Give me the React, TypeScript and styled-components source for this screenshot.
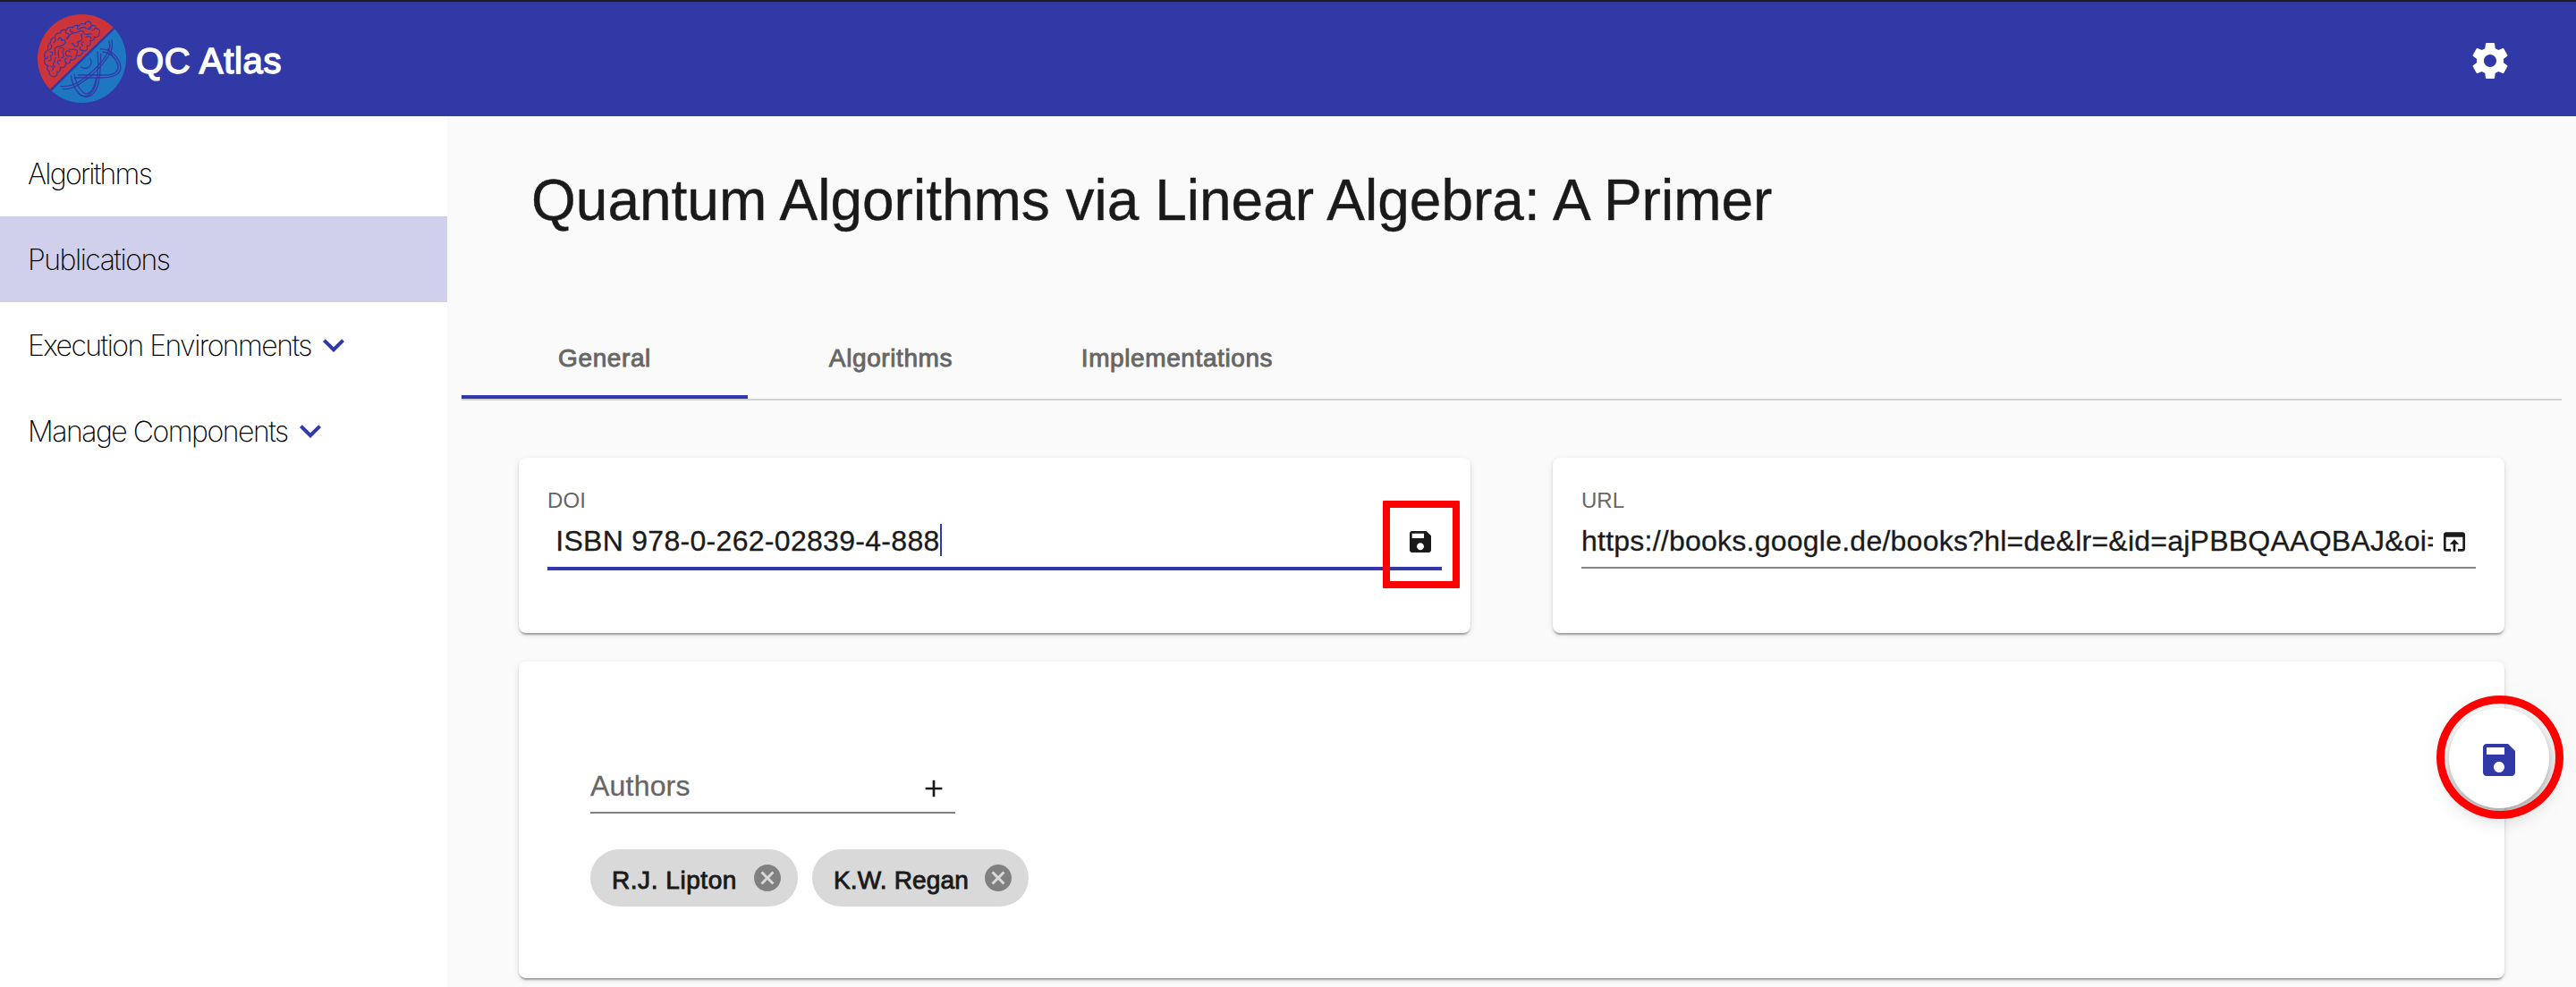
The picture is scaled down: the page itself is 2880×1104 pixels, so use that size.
import React from "react";
import styled, { createGlobalStyle } from "styled-components";

const PRIMARY = "#3139a6";
const INK = "#1a1a1a";
const MUTED = "#666666";

const GlobalStyle = createGlobalStyle`
  * { box-sizing: border-box; }
  body {
    margin: 0;
    background: #fafafa;
    color: ${INK};
    font-family: "Liberation Sans", Arial, sans-serif;
    overflow: hidden;
  }
`;

const Page = styled.div`
  display: flex;
  flex-direction: column;
  height: 1104px;
  overflow: hidden;
  border-top: 2px solid #1e1e1e;
`;

const Toolbar = styled.header`
  flex: none;
  height: 128px;
  padding: 4px 72px 0 42px;
  display: flex;
  align-items: center;
  background: ${PRIMARY};
  color: #fff;
`;

const Brand = styled.div`
  flex: 1;
  display: flex;
  align-items: center;
  gap: 11px;
  > svg { margin-top: -5px; }
`;

const BrandName = styled.span`
  font-size: 40px;
  line-height: 48px;
  letter-spacing: 0.65px;
  -webkit-text-stroke: 1.5px #fff;
`;

const Body = styled.div`
  flex: 1;
  display: flex;
  min-height: 0;
`;

const Sidebar = styled.nav`
  flex: none;
  width: 500px;
  padding-top: 16px;
  background: #fff;
`;

const NavItem = styled.a<{ $active?: boolean; $track?: number }>`
  display: flex;
  align-items: center;
  height: 96px;
  padding-left: 31px;
  background: ${(p) => (p.$active ? "#d0d0ec" : "transparent")};
  color: #000;
  font-family: Inter, "Liberation Sans", sans-serif;
  font-weight: 250;
  font-size: 32px;
  letter-spacing: ${(p) => p.$track ?? -1}px;
  white-space: nowrap;
  svg { color: ${PRIMARY}; margin-left: 1px; }
`;

const Main = styled.main`
  flex: 1;
  min-width: 0;
  padding: 54px 16px 0;
`;

const Title = styled.h1`
  margin: 0 0 127px;
  padding-left: 78px;
  font-size: 64px;
  line-height: 80px;
  font-weight: 400;
  height: 80px;
  -webkit-text-stroke: 0.4px ${INK};
`;

const Tabs = styled.div`
  display: flex;
  height: 57px;
  border-bottom: 2px solid #d2d2d2;
`;

const Tab = styled.div<{ $active?: boolean }>`
  width: 320px;
  text-align: center;
  font-size: 28px;
  line-height: 20px;
  color: ${MUTED};
  letter-spacing: 0.6px;
  -webkit-text-stroke: 0.9px ${MUTED};
  border-bottom: ${(p) => (p.$active ? `4px solid ${PRIMARY}` : "none")};
`;

const Content = styled.div`
  padding: 64px 64px 0;
  display: grid;
  grid-template-columns: 1064px 1064px;
  column-gap: 92px;
  row-gap: 32px;
`;

const Card = styled.section<{ $wide?: boolean }>`
  grid-column: ${(p) => (p.$wide ? "1 / -1" : "auto")};
  height: ${(p) => (p.$wide ? 354 : 196)}px;
  padding: ${(p) => (p.$wide ? "120px 80px 0" : "32px 32px 0")};
  border-radius: 8px;
  background: #fff;
  box-shadow: 0 4px 2px -2px rgba(0, 0, 0, 0.2),
    0 2px 2px 0 rgba(0, 0, 0, 0.14), 0 2px 6px 0 rgba(0, 0, 0, 0.12);
`;

const Label = styled.label<{ $track?: number }>`
  display: block;
  height: 32px;
  line-height: 32px;
  font-size: 24px;
  color: ${MUTED};
  letter-spacing: ${(p) => p.$track ?? 0}px;
`;

const InputRow = styled.div<{ $focused?: boolean }>`
  display: flex;
  align-items: center;
  gap: 8px;
  height: ${(p) => (p.$focused ? 62 : 60)}px;
  padding: 2px 8px 0 0;
  border-bottom: ${(p) => (p.$focused ? `4px solid ${PRIMARY}` : "2px solid #858585")};
`;

const Value = styled.div<{ $track?: number; $muted?: boolean }>`
  flex: 1;
  min-width: 0;
  display: flex;
  align-items: center;
  overflow: hidden;
  white-space: pre;
  font-size: 32px;
  line-height: 40px;
  padding-bottom: 2px;
  color: ${(p) => (p.$muted ? MUTED : INK)};
  letter-spacing: ${(p) => p.$track ?? 0}px;
  -webkit-text-stroke: 0.3px currentColor;
`;

const Caret = styled.span`
  width: 2px;
  height: 36px;
  margin-bottom: 2px;
  background: ${PRIMARY};
`;

const AuthorField = styled.div`
  display: flex;
  align-items: center;
  width: 408px;
  height: 50px;
  padding: 0 8px 8px 0;
  border-bottom: 2px solid #808080;
  svg { margin-top: 4px; }
`;

const Chips = styled.div`
  display: flex;
  gap: 16px;
  margin-top: 40px;
`;

const Chip = styled.div<{ $width: number; $track: number }>`
  display: flex;
  align-items: center;
  justify-content: space-between;
  width: ${(p) => p.$width}px;
  height: 64px;
  padding: 0 16px 0 24px;
  border-radius: 32px;
  background: #d9d9d9;
  font-size: 28px;
  line-height: 36px;
  white-space: nowrap;
  letter-spacing: ${(p) => p.$track}px;
  -webkit-text-stroke: 0.9px ${INK};
  svg { color: #808080; stroke: none; }
  span { padding-top: 5px; }
`;

const Fab = styled.button`
  position: absolute;
  left: 2738px;
  top: 792px;
  width: 112px;
  height: 112px;
  padding: 4px 0 0;
  display: flex;
  align-items: center;
  justify-content: center;
  border: 0;
  border-radius: 50%;
  background: #fff;
  color: ${PRIMARY};
  box-shadow: 0 6px 10px -2px rgba(0, 0, 0, 0.2),
    0 12px 20px 0 rgba(0, 0, 0, 0.14), 0 2px 36px 0 rgba(0, 0, 0, 0.12);
`;

const SquareMark = styled.div`
  position: absolute;
  left: 1546px;
  top: 560px;
  width: 86px;
  height: 98px;
  border: 8px solid #ff0000;
  border-radius: 1px;
`;

const RoundMark = styled.div`
  position: absolute;
  left: 2724px;
  top: 778px;
  width: 142px;
  height: 138px;
  border: 9px solid #ff0000;
  border-radius: 50%;
`;

const paths = {
  settings:
    "M19.43 12.98c.04-.32.07-.64.07-.98s-.03-.66-.07-.98l2.11-1.65c.19-.15.24-.42.12-.64l-2-3.46c-.12-.22-.39-.3-.61-.22l-2.49 1c-.52-.4-1.08-.73-1.69-.98l-.38-2.65C14.46 2.18 14.25 2 14 2h-4c-.25 0-.46.18-.49.42l-.38 2.65c-.61.25-1.17.59-1.69.98l-2.49-1c-.23-.09-.49 0-.61.22l-2 3.46c-.13.22-.07.49.12.64l2.11 1.65c-.04.32-.07.65-.07.98s.03.66.07.98l-2.11 1.65c-.19.15-.24.42-.12.64l2 3.46c.12.22.39.3.61.22l2.49-1c.52.4 1.08.73 1.69.98l.38 2.65c.03.24.24.42.49.42h4c.25 0 .46-.18.49-.42l.38-2.65c.61-.25 1.17-.59 1.69-.98l2.49 1c.23.09.49 0 .61-.22l2-3.46c.12-.22.07-.49-.12-.64l-2.11-1.65zM12 15.5c-1.93 0-3.5-1.57-3.5-3.5s1.57-3.5 3.5-3.5 3.5 1.57 3.5 3.5-1.57 3.5-3.5 3.5z",
  expand: "M16.59 8.59L12 13.17 7.41 8.59 6 10l6 6 6-6z",
  save: "M17 3H5c-1.11 0-2 .9-2 2v14c0 1.1.89 2 2 2h14c1.1 0 2-.9 2-2V7l-4-4zm-5 16c-1.66 0-3-1.34-3-3s1.34-3 3-3 3 1.34 3 3-1.34 3-3 3zm3-10H5V5h10v4z",
  open: "M19 4H5c-1.11 0-2 .9-2 2v12c0 1.1.89 2 2 2h4v-2H5V8h14v10h-4v2h4c1.1 0 2-.9 2-2V6c0-1.1-.89-2-2-2zm-7 6l-4 4h3v6h2v-6h3l-4-4z",
  add: "M19 13h-6v6h-2v-6H5v-2h6V5h2v6h6v2z",
  cancel:
    "M12 2C6.47 2 2 6.47 2 12s4.47 10 10 10 10-4.47 10-10S17.53 2 12 2zm5 13.59L15.59 17 12 13.41 8.41 17 7 15.59 10.59 12 7 8.41 8.41 7 12 10.59 15.59 7 17 8.41 13.41 12 17 15.59z",
};

const IconSvg = styled.svg`
  flex: none;
  display: block;
`;

function Icon({ name, size }: { name: keyof typeof paths; size: number }) {
  return (
    <IconSvg width={size} height={size} viewBox="0 0 24 24" fill="currentColor">
      <path d={paths[name]} />
    </IconSvg>
  );
}

function Logo() {
  return (
    <IconSvg width="99" height="99" viewBox="36 33 297 297" fill="none">
      <clipPath id="disc">
        <circle cx="184.5" cy="181.5" r="148.5" />
      </clipPath>
      <g clipPath="url(#disc)">
        <path d="M30 337V27H346Z" fill="#cc343b" />
        <path d="M30 337H346V27Z" fill="#2077c1" />
        <path d="M30 337L346 27" stroke={PRIMARY} strokeWidth="8" />
      </g>
      <g stroke={PRIMARY} strokeWidth="3.4" strokeLinecap="round" strokeLinejoin="round">
        <path d="M92 242C80 243 73 235 75 224C66 221 66 210 72 206C57 202 55 188 62 181C56 170 60 158 72 152C68 141 72 131 80 128C78 118 84 111 94 111C94 101 102 94 111 97C114 86 123 82 132 86C137 77 147 73 154 78C158 70 168 68 174 72C178 63 190 63 195 67C197 54 213 53 216 66C218 72 214 77 208 78" />
        <path d="M216 71C228 68 234 75 231 80C244 80 247 90 243 96C244 106 234 113 226 108C228 118 220 125 212 121C217 132 211 141 201 139C206 150 199 158 190 155C185 172 174 176 166 170C166 184 155 190 147 184C147 196 139 201 132 197C130 210 120 216 112 210C114 222 108 229 102 226C103 236 98 243 92 242" />
        <path d="M76 152C86 146 84 136 80 134M78 160C91 158 89 169 79 173C85 183 80 190 72 189M62 182C67 183 70 179 70 174M94 112C98 118 96 125 90 128M105 119C105 110 117 109 116 121C123 116 132 121 128 130C122 143 102 137 96 146C88 155 99 160 94 169M110 147C125 139 127 153 119 160C128 169 124 179 115 180M107 153C99 166 111 169 107 180M132 86C127 92 132 97 137 98C145 98 140 110 134 111M147 82C143 90 149 95 155 91M132 116C141 116 139 102 150 98C160 93 169 95 174 91C185 85 191 91 192 97M171 73C166 82 173 86 179 81C186 76 194 76 201 81C207 84 213 82 216 77M185 99C176 103 189 111 185 118C181 126 175 122 169 126C177 132 172 141 164 142C156 141 158 130 150 130M142 149C149 153 157 149 163 151C173 154 169 164 166 167M195 100C204 102 210 96 219 99M198 110C210 103 218 110 215 117M190 126C182 126 181 134 188 138M181 143C173 149 181 155 188 154M145 158C133 150 125 163 133 171C139 178 145 169 150 176M136 180C126 180 125 189 132 196M115 188C103 184 98 197 109 201M98 178C90 181 97 188 92 193C86 199 90 206 94 210M80 207C89 207 91 216 85 221M218 87C225 88 227 82 229 80" />
      </g>
      <g stroke={PRIMARY} strokeWidth="3.8" strokeLinecap="round">
        <path d="M275 123C283 139 276 157 265 173C244 205 211 234 183 254C157 272 136 277 113 274" />
        <path d="M285 119C291 143 284 158 273 174C251 207 220 239 190 258C163 278 141 288 120 283" />
        <path d="M247 150C274 147 301 169 312 196C324 235 291 246 247 246H160" />
        <path d="M255 159C280 162 299 180 306 204C309 232 286 238 250 237H172" />
        <path d="M237 158C241 196 239 231 233 260C223 309 191 319 172 295C160 281 151 260 148 238" />
        <path d="M248 166C248 206 247 234 239 268C225 315 195 318 174 298" />
        <path d="M159 234C164 260 175 284 190 296C211 310 226 281 232 250" />
        <path d="M272 148C280 161 286 172 293 180" />
        <path d="M212 180C220 193 215 207 205 212C197 216 188 214 182 210" />
      </g>
    </IconSvg>
  );
}

const navItems = [
  { label: "Algorithms", track: -1.75 },
  { label: "Publications", active: true, track: -1.5 },
  { label: "Execution Environments", expandable: true, track: -1.55 },
  { label: "Manage Components", expandable: true, track: -1.5 },
];

export default function App() {
  return (
    <>
      <GlobalStyle />
      <Page>
        <Toolbar>
          <Brand>
            <Logo />
            <BrandName>QC Atlas</BrandName>
          </Brand>
          <Icon name="settings" size={48} />
        </Toolbar>
        <Body>
          <Sidebar>
            {navItems.map((item) => (
              <NavItem key={item.label} $active={item.active} $track={item.track}>
                {item.label}
                {item.expandable && <Icon name="expand" size={48} />}
              </NavItem>
            ))}
          </Sidebar>
          <Main>
            <Title>Quantum Algorithms via Linear Algebra: A Primer</Title>
            <Tabs>
              <Tab $active>General</Tab>
              <Tab>Algorithms</Tab>
              <Tab>Implementations</Tab>
            </Tabs>
            <Content>
              <Card>
                <Label $track={0.1}>DOI</Label>
                <InputRow $focused>
                  <Value $track={0.3}>
                    {" ISBN 978-0-262-02839-4-888"}
                    <Caret />
                  </Value>
                  <Icon name="save" size={32} />
                </InputRow>
              </Card>
              <Card>
                <Label>URL</Label>
                <InputRow>
                  <Value $track={0.24}>
                    {"https://books.google.de/books?hl=de&lr=&id=ajPBBQAAQBAJ&oi="}
                  </Value>
                  <Icon name="open" size={32} />
                </InputRow>
              </Card>
              <Card $wide>
                <AuthorField>
                  <Value $muted $track={0.2}>Authors</Value>
                  <Icon name="add" size={32} />
                </AuthorField>
                <Chips>
                  <Chip $width={232} $track={0.55}>
                    <span>R.J. Lipton</span>
                    <Icon name="cancel" size={36} />
                  </Chip>
                  <Chip $width={242} $track={0.15}>
                    <span>K.W. Regan</span>
                    <Icon name="cancel" size={36} />
                  </Chip>
                </Chips>
              </Card>
            </Content>
          </Main>
        </Body>
      </Page>
      <SquareMark />
      <Fab>
        <Icon name="save" size={48} />
      </Fab>
      <RoundMark />
    </>
  );
}
